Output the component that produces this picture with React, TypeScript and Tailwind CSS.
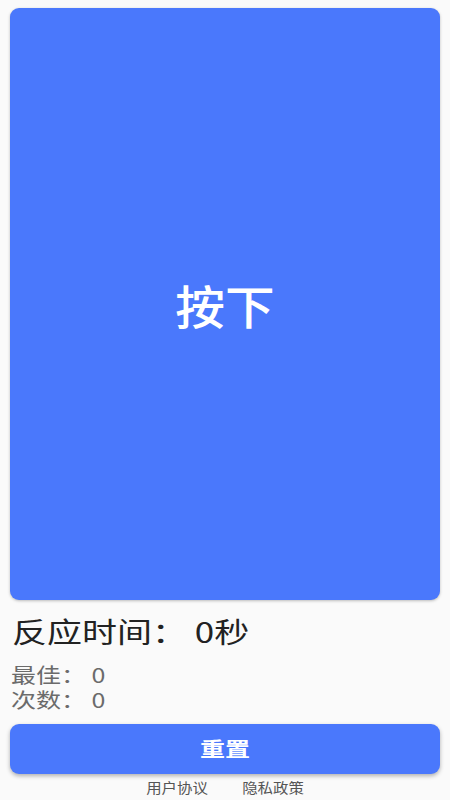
export default function App() {
  const font = { fontFamily: '"Noto Sans CJK SC", "Noto Sans", sans-serif' };
  return (
    <div className="w-[450px] h-[800px] bg-[#fafafa] flex flex-col px-[10px] pt-[8px]" style={font}>
      {/* Press area */}
      <button className="h-[592px] w-full rounded-[9px] bg-[#4a78fc] shadow-[0_1px_3px_rgba(0,0,0,0.25)] flex items-center justify-center">
        <span className="inline-block scale-x-[1.08] text-[46px] font-medium text-white leading-none">按下</span>
      </button>

      <p className="mt-[12px] ml-[2px] text-[28px] leading-[38px] text-[#222]">
        <span className="inline-block origin-left scale-x-125">反应时间： 0秒</span>
      </p>

      <div className="mt-[12px] ml-[1px] text-[20px] leading-[25px] text-[#6b6b6b]">
        <p><span className="inline-block origin-left scale-x-125">最佳： 0</span></p>
        <p><span className="inline-block origin-left scale-x-125">次数： 0</span></p>
      </div>

      <button className="mt-[12px] h-[50px] w-full rounded-[9px] bg-[#4a78fc] shadow-[0_2px_4px_rgba(0,0,0,0.3)] text-white text-[20px] font-bold">
        <span className="inline-block scale-x-125">重置</span>
      </button>

      <div className="mt-[5px] flex justify-center gap-[40px] text-[14px] leading-[16px] text-[#555]">
        <span className="inline-block scale-x-110">用户协议</span>
        <span className="inline-block scale-x-110">隐私政策</span>
      </div>
    </div>
  );
}
